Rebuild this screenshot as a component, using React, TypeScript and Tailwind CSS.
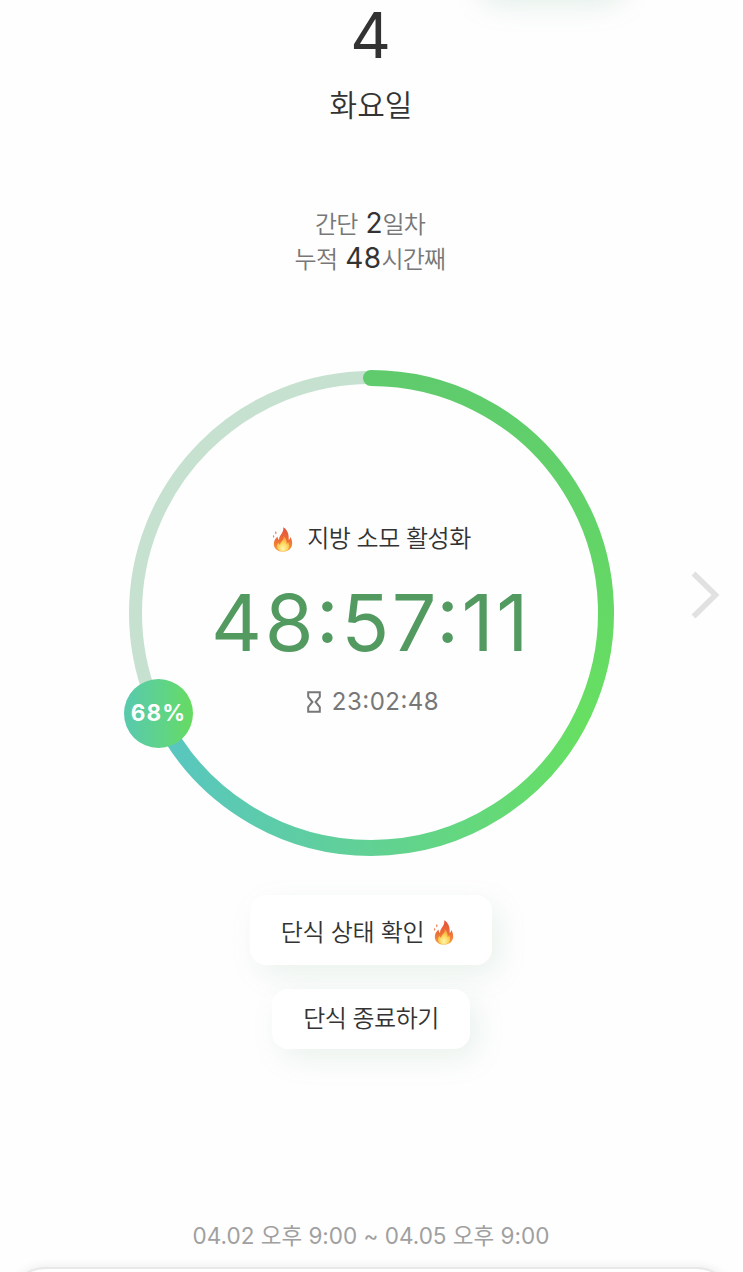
import { useId } from 'react';

const progress = 68;

function Flame({ className }: { className?: string }) {
  const id = useId();
  return (
    <svg viewBox="0 0 24 28" className={className} aria-hidden="true">
      <defs>
        <linearGradient id={`${id}-outer`} x1="0" y1="0" x2="0" y2="1">
          <stop offset="0" stopColor="#e2513a" />
          <stop offset="0.55" stopColor="#ee6f35" />
          <stop offset="1" stopColor="#f6a243" />
        </linearGradient>
        <radialGradient id={`${id}-inner`} cx="0.5" cy="0.8" r="0.75">
          <stop offset="0" stopColor="#fff6b0" />
          <stop offset="0.5" stopColor="#fdd458" />
          <stop offset="1" stopColor="#f7983a" />
        </radialGradient>
      </defs>
      <path
        d="M12.300.6c.5 3.400-.9 5.600-2.500 8C8.200 10.800 7.600 12.500 7.700 14.500c-1.200-.7-1.700-2-1.500-3.700C3.600 13.100 2 15.600 2 18.800 2 23.800 6.300 27.200 12 27.200s10-3.400 10-8.800c0-3.200-.8-5-1.900-7.500-.3 1.900-.8 2.900-1.900 3.500.5-5.700-1.200-11.200-5.900-13.800z"
        fill={`url(#${id}-outer)`}
      />
      <path
        d="M12.600 10.500c.5 3-.8 4.200-2.500 6.100-.8.900-1.300 1.800-1.300 3-.9-.4-1.500-1.100-1.700-2.100-1.100 1.300-1.700 2.500-1.700 4.100 0 3.200 2.900 5.200 6.600 5.200s6.700-2.100 6.700-5.500c0-2-.6-3.200-1.200-4.600-.3 1.100-.8 1.800-1.600 2.200.4-3.500-.7-6.300-3.300-8.400z"
        fill={`url(#${id}-inner)`}
      />
      <path d="M4.200 4.800c.9 1.400.9 2.500.1 3.700-1-.9-1.100-2.200-.1-3.700zM1.700 9.200c.9.900 1 1.900.4 3.100-1-.8-1.200-1.900-.4-3.100z" fill="#ee6a3c" />
    </svg>
  );
}

function Hourglass() {
  return (
    <svg viewBox="0 0 14 22" className="h-[22px] w-[14px]" fill="none" stroke="#777" strokeWidth="2" aria-hidden="true">
      <path d="M1.200 1.200h11.600v4.600L8.600 11l4.200 5.200v4.600H1.200v-4.600L5.400 11 1.200 5.800z" />
    </svg>
  );
}

function ProgressRing() {
  return (
    <svg viewBox="0 0 500 500" className="col-start-1 row-start-1 size-[500px]" fill="none" aria-hidden="true">
      <defs>
        <linearGradient id="ring-rise" gradientUnits="userSpaceOnUse" x1="0" y1="15" x2="0" y2="350">
          <stop offset="0" stopColor="#5fcb6d" />
          <stop offset="1" stopColor="#67df62" />
        </linearGradient>
        <linearGradient id="ring-fall" gradientUnits="userSpaceOnUse" x1="37" y1="0" x2="463" y2="0">
          <stop offset="0" stopColor="#58c6c2" />
          <stop offset="0.5" stopColor="#61d194" />
          <stop offset="1" stopColor="#67df62" />
        </linearGradient>
      </defs>
      <circle cx="250" cy="250" r="235.500" stroke="#c6e1cf" strokeWidth="13" />
      <path d="M463 349.300A235 235 0 0 1 37.400 350.100" stroke="url(#ring-fall)" strokeWidth="16" />
      <path d="M250 15A235 235 0 0 1 463 349.300" stroke="url(#ring-rise)" strokeWidth="16" strokeLinecap="round" />
    </svg>
  );
}

export default function App() {
  return (
    <main className="relative flex h-[1272px] w-[743px] flex-col items-center overflow-hidden bg-[#fefefe] pr-px font-['Inter','Noto_Sans_CJK_KR',sans-serif] text-[#333]">
      {/* Shadow of the button scrolled off the top */}
      <div className="absolute left-[472px] top-[-62px] h-[56px] w-[144px] rounded-[16px] bg-white shadow-[8px_10px_30px_rgba(70,150,100,0.15)]" />

      <header className="flex flex-col items-center">
        <div className="pr-px text-[63px] leading-[71px]">4</div>
        <div className="mt-[12px] h-[45px] text-[30px] font-[350] leading-[44px]">화요일</div>
      </header>

      <section className="mt-[78px] flex flex-col items-center pr-[2px] text-[24px] font-[350] leading-[35px] tracking-[-0.8px] text-[#777] [word-spacing:2px]">
        <p className="h-[35px]">간단 <span className="text-[28px] font-normal tracking-normal text-[#333]">2</span>일차</p>
        <p className="h-[35px]">누적 <span className="text-[28px] font-normal tracking-[0.5px] text-[#333]">48</span>시간째</p>
      </section>

      <section className="mt-[87px] grid size-[500px] place-items-center">
        <ProgressRing />
        <div className="z-10 col-start-1 row-start-1 flex flex-col items-center pt-[14px]">
          <div className="flex h-[36px] items-center pl-px">
            <Flame className="mr-[13px] h-[27px] w-[22px]" />
            <span className="text-[24px] font-[350] leading-[36px] tracking-[-0.5px]">지방 소모 활성화</span>
          </div>
          <div className="mt-[19px] h-[92px] text-[79px] font-[380] leading-[92px] tracking-[2.5px] text-[#529a60] [font-feature-settings:'case']">48:57:11</div>
          <div className="mt-[17px] flex h-[34px] items-center gap-[11px] pl-[4px] text-[24px] tracking-[0.5px] text-[#777] [font-feature-settings:'case']">
            <Hourglass />
            <span>23:02:48</span>
          </div>
        </div>
      </section>
      <div className="absolute left-[124px] top-[679px] flex size-[69px] items-center justify-center rounded-full bg-linear-to-r from-[#59c9ae] to-[#66db5f] pb-px text-[22.5px] font-bold tracking-[1.2px] text-white">
        {progress}%
      </div>

      <button className="mt-[32px] flex h-[70px] w-[242px] items-center justify-center rounded-[16px] bg-white pr-[6px] pt-[5px] text-[24px] font-[350] tracking-[-0.3px] shadow-[8px_10px_30px_rgba(70,150,100,0.11)]">
        단식 상태 확인
        <Flame className="ml-[9px] h-[27px] w-[22px]" />
      </button>
      <button className="mt-[24px] h-[60px] w-[198px] rounded-[16px] bg-white text-[24px] font-[350] tracking-[-0.5px] shadow-[8px_10px_30px_rgba(70,150,100,0.11)]">
        단식 종료하기
      </button>

      <footer className="mt-[169px] h-[36px] whitespace-nowrap text-[22.5px] font-[380] leading-[36px] text-[#a0a0a0]">
        04.02 오후 9:00 ~ 04.05 오후 9:00
      </footer>

      {/* Top edge of the bottom sheet */}
      <div className="absolute left-[6px] top-[1267px] h-[80px] w-[730px] rounded-[48px] border-2 border-[#e8e8e8] bg-white shadow-[0_-2px_8px_rgba(0,0,0,0.06)]" />

      <svg viewBox="0 0 30 50" className="absolute left-[690px] top-[570px] h-[50px] w-[30px]" fill="none" stroke="#e1e1e1" strokeWidth="5.500" aria-hidden="true">
        <path d="M3.500 3.500l22 21.500-22 21.500" />
      </svg>
    </main>
  );
}
